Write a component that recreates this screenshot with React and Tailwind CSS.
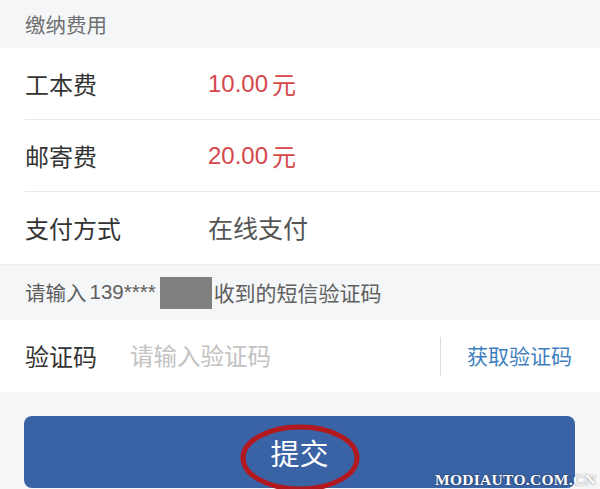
export default function App() {
  const font = { fontFamily: '"Noto Sans CJK SC", "Noto Sans", sans-serif' };
  const num = { fontFamily: '"Liberation Sans", "Noto Sans CJK SC", sans-serif' };
  return (
    <div
      className="relative w-[600px] h-[489px] overflow-hidden bg-[#f4f6f8] flex flex-col"
      style={font}
    >
      <div className="h-[48px] shrink-0 pl-[25px] flex items-center text-[20.5px] text-[#707070]">
        缴纳费用
      </div>
      <div className="bg-white flex flex-col">
        <div className="h-[71px] pl-[25px] flex items-center text-[24px]">
          <span className="w-[183px] text-[#333]">工本费</span>
          <span className="text-[#d5474b] flex items-center">
            <span style={num}>10.00</span>
            <span className="ml-[4px]">元</span>
          </span>
        </div>
        <div className="ml-[25px] h-px bg-[#e9e9e9]" />
        <div className="h-[71px] pl-[25px] flex items-center text-[24px]">
          <span className="w-[183px] text-[#333]">邮寄费</span>
          <span className="text-[#d5474b] flex items-center">
            <span style={num}>20.00</span>
            <span className="ml-[4px]">元</span>
          </span>
        </div>
        <div className="ml-[25px] h-px bg-[#e9e9e9]" />
        <div className="h-[72px] pl-[25px] flex items-center text-[24px]">
          <span className="w-[183px] text-[#333]">支付方式</span>
          <span className="text-[#555] text-[25px]">在线支付</span>
        </div>
      </div>
      <div className="h-[56px] shrink-0 pl-[25px] flex items-center text-[20.5px] text-[#5f5f5f] border-t border-[#eceef0]">
        <span>请输入</span>
        <span className="ml-[3px]" style={num}>139****</span>
        <span className="inline-block w-[52px] h-[32px] bg-[#7f7f7f] ml-[4px] mr-[2px]" />
        <span className="text-[21px]">收到的短信验证码</span>
      </div>
      <div className="h-[72px] shrink-0 bg-white pl-[25px] flex items-center">
        <span className="w-[105px] text-[24px] text-[#333]">验证码</span>
        <span className="flex-1 text-[23.5px] text-[#c2c2c2]">请输入验证码</span>
        <div className="w-px h-[39px] bg-[#dcdcdc]" />
        <span className="w-[159px] pl-[26px] text-[21px] text-[#3f7fc0]">获取验证码</span>
      </div>
      <div className="pt-[24px] px-[24px]">
        <div className="relative h-[72px] w-[551px] rounded-[8px] bg-[#3a63a6] flex items-center justify-center">
          <span className="text-[29px] text-white leading-none">提交</span>
          <svg
            className="absolute left-[215px] top-[8px]"
            width="122"
            height="68"
            viewBox="0 0 122 68"
          >
            <ellipse cx="61" cy="34" rx="57" ry="31" fill="none" stroke="#b2191e" strokeWidth="5" />
          </svg>
        </div>
      </div>
      <div
        className="absolute left-[435px] top-[468px] whitespace-nowrap text-[15.5px] font-bold text-white tracking-[0.3px]"
        style={{ fontFamily: '"Liberation Serif", serif', textShadow: '0 0 2px rgba(0,0,0,0.6)' }}
      >
        MODIAUTO.COM.CN
      </div>
    </div>
  );
}
